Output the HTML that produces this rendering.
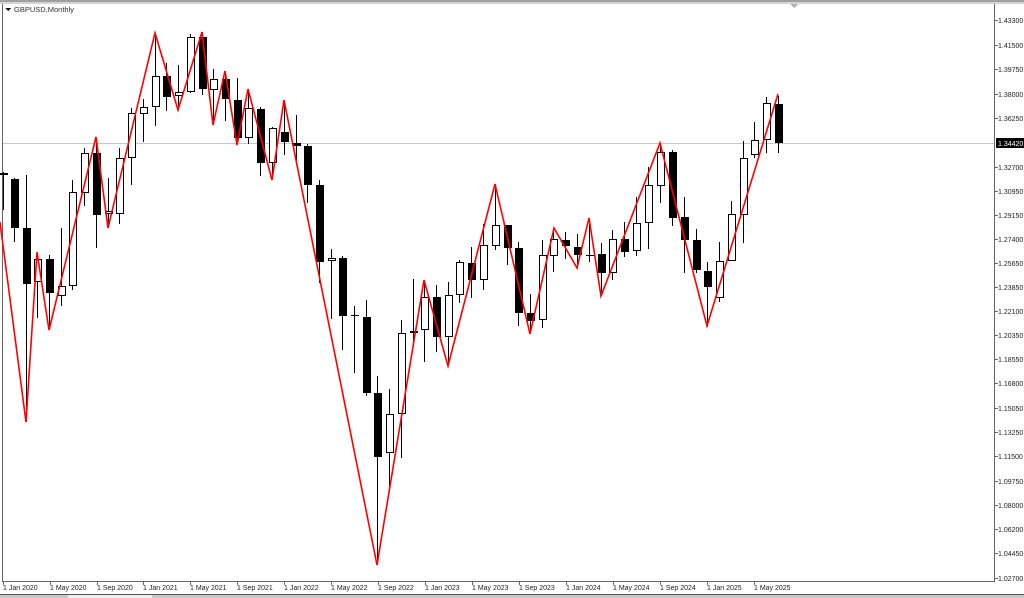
<!DOCTYPE html>
<html><head><meta charset="utf-8"><style>
html,body{margin:0;padding:0;background:#fff;width:1024px;height:598px;overflow:hidden}
svg{display:block;font-family:"Liberation Sans",Tahoma,sans-serif}
</style></head><body>
<svg width="1024" height="598" viewBox="0 0 1024 598" xmlns="http://www.w3.org/2000/svg" shape-rendering="crispEdges">
<rect x="0" y="0" width="1024" height="598" fill="#fff"/>
<rect x="0" y="0" width="1024" height="2" fill="#a0a0a0"/>
<rect x="0" y="2" width="1024" height="2" fill="#d4d4d4"/>
<polygon points="790,4 798,4 794,8" fill="#b0b0b0"/>
<!-- frame -->
<line x1="2.5" y1="4" x2="2.5" y2="581" stroke="#666" stroke-width="1"/>
<line x1="994.5" y1="4" x2="994.5" y2="581" stroke="#666" stroke-width="1"/>
<line x1="2" y1="581.5" x2="995" y2="581.5" stroke="#666" stroke-width="1"/>
<!-- current price line -->
<line x1="3" y1="143.5" x2="994" y2="143.5" stroke="#c8c8c8" stroke-width="1"/>
<!-- title -->
<polygon points="5,8 11,8 8,11" fill="#000"/>
<text x="14" y="12" font-size="7.5" fill="#333">GBPUSD,Monthly</text>
<!-- candles -->
<g stroke="#000" stroke-width="1" id="c"></g>
<g id="cs">
</g>
<!-- zigzag -->
<polyline fill="none" stroke="#ff0000" stroke-width="1.6" shape-rendering="auto" stroke-linejoin="miter" points="0,222 26,422 37,252 49,330 96,137 108,228 155,33 178,110 202,32 213,125 225,71 237,145 248,89 272,180 284,100 377,565 424,280 448,366 495,184 530,334 554,228 577,268 589,218 601,296 660,143 707,326 778,94"/>
<!-- right axis labels -->
<g font-size="7" fill="#222">
<g stroke="#666"><line x1="994" y1="20.5" x2="998" y2="20.5"/><line x1="994" y1="45.5" x2="998" y2="45.5"/><line x1="994" y1="69.5" x2="998" y2="69.5"/><line x1="994" y1="94.5" x2="998" y2="94.5"/><line x1="994" y1="118.5" x2="998" y2="118.5"/><line x1="994" y1="167.5" x2="998" y2="167.5"/><line x1="994" y1="191.5" x2="998" y2="191.5"/><line x1="994" y1="215.5" x2="998" y2="215.5"/><line x1="994" y1="239.5" x2="998" y2="239.5"/><line x1="994" y1="263.5" x2="998" y2="263.5"/><line x1="994" y1="287.5" x2="998" y2="287.5"/><line x1="994" y1="311.5" x2="998" y2="311.5"/><line x1="994" y1="335.5" x2="998" y2="335.5"/><line x1="994" y1="359.5" x2="998" y2="359.5"/><line x1="994" y1="383.5" x2="998" y2="383.5"/><line x1="994" y1="408.5" x2="998" y2="408.5"/><line x1="994" y1="432.5" x2="998" y2="432.5"/><line x1="994" y1="456.5" x2="998" y2="456.5"/><line x1="994" y1="481.5" x2="998" y2="481.5"/><line x1="994" y1="505.5" x2="998" y2="505.5"/><line x1="994" y1="529.5" x2="998" y2="529.5"/><line x1="994" y1="553.5" x2="998" y2="553.5"/><line x1="994" y1="578.5" x2="998" y2="578.5"/></g>
<text x="998" y="23">1.43300</text><text x="998" y="48">1.41500</text><text x="998" y="72">1.39750</text><text x="998" y="97">1.38000</text><text x="998" y="121">1.36250</text>
<rect x="996" y="138" width="28" height="10" fill="#000"/><text x="998" y="146" fill="#fff">1.34420</text>
<text x="998" y="170">1.32700</text><text x="998" y="194">1.30950</text><text x="998" y="218">1.29150</text><text x="998" y="242">1.27400</text><text x="998" y="266">1.25650</text><text x="998" y="290">1.23850</text><text x="998" y="314">1.22100</text><text x="998" y="338">1.20350</text><text x="998" y="362">1.18550</text><text x="998" y="386">1.16800</text><text x="998" y="411">1.15050</text><text x="998" y="435">1.13250</text><text x="998" y="459">1.11500</text><text x="998" y="484">1.09750</text><text x="998" y="508">1.08000</text><text x="998" y="532">1.06200</text><text x="998" y="556">1.04450</text><text x="998" y="581">1.02700</text>
</g>
<!-- bottom axis -->
<g font-size="7" fill="#222">
<g stroke="#666"><line x1="3.5" y1="581" x2="3.5" y2="585"/><line x1="50.5" y1="581" x2="50.5" y2="585"/><line x1="97.5" y1="581" x2="97.5" y2="585"/><line x1="143.5" y1="581" x2="143.5" y2="585"/><line x1="190.5" y1="581" x2="190.5" y2="585"/><line x1="237.5" y1="581" x2="237.5" y2="585"/><line x1="284.5" y1="581" x2="284.5" y2="585"/><line x1="331.5" y1="581" x2="331.5" y2="585"/><line x1="378.5" y1="581" x2="378.5" y2="585"/><line x1="425.5" y1="581" x2="425.5" y2="585"/><line x1="472.5" y1="581" x2="472.5" y2="585"/><line x1="519.5" y1="581" x2="519.5" y2="585"/><line x1="566.5" y1="581" x2="566.5" y2="585"/><line x1="613.5" y1="581" x2="613.5" y2="585"/><line x1="660.5" y1="581" x2="660.5" y2="585"/><line x1="707.5" y1="581" x2="707.5" y2="585"/><line x1="754.5" y1="581" x2="754.5" y2="585"/></g>
<text x="3" y="590">1 Jan 2020</text><text x="50" y="590">1 May 2020</text><text x="97" y="590">1 Sep 2020</text><text x="143" y="590">1 Jan 2021</text><text x="190" y="590">1 May 2021</text><text x="237" y="590">1 Sep 2021</text><text x="284" y="590">1 Jan 2022</text><text x="331" y="590">1 May 2022</text><text x="378" y="590">1 Sep 2022</text><text x="425" y="590">1 Jan 2023</text><text x="472" y="590">1 May 2023</text><text x="519" y="590">1 Sep 2023</text><text x="566" y="590">1 Jan 2024</text><text x="613" y="590">1 May 2024</text><text x="660" y="590">1 Sep 2024</text><text x="707" y="590">1 Jan 2025</text><text x="754" y="590">1 May 2025</text>
</g>
<rect x="0" y="594" width="1024" height="4" fill="#c8c8c8"/>
<rect x="0" y="594" width="1024" height="1" fill="#555"/>
<rect x="68" y="595" width="84" height="3" fill="#eee"/>
</svg>
<script>
var d=[[3,173,175,172,210,1],[14,179,228,178,242,1],[26,228,284,175,422,1],[37,259,282,253,318,0],[49,259,293,255,330,1],[61,286,296,228,306,0],[72,192,286,180,290,0],[84,153,193,148,206,0],[96,153,215,138,248,1],[108,211,214,178,228,0],[119,158,214,148,224,0],[131,113,158,108,185,0],[143,107,114,99,142,0],[155,76,107,33,126,0],[166,76,97,63,111,1],[178,92,96,65,110,0],[190,37,92,34,93,0],[202,37,89,32,95,1],[213,79,90,69,125,0],[225,79,99,71,121,1],[237,100,138,78,145,1],[248,108,138,89,144,0],[260,109,163,107,176,1],[272,128,163,127,180,0],[284,132,142,100,155,1],[296,143,146,115,165,1],[307,146,185,144,203,1],[319,185,262,180,283,1],[331,258,261,249,319,0],[342,258,316,256,350,1],[354,315,316,306,373,1],[366,317,393,300,396,1],[377,393,457,376,565,1],[389,414,453,389,490,0],[401,333,414,320,458,0],[413,331,333,279,342,0],[424,297,330,280,362,0],[436,297,337,285,352,1],[448,295,337,282,366,0],[459,262,295,260,303,0],[471,263,280,247,298,1],[483,245,280,224,290,0],[495,225,246,184,250,0],[507,225,248,225,265,1],[518,248,313,242,326,1],[530,313,321,294,334,1],[542,255,320,240,328,0],[553,239,256,230,272,0],[565,240,246,232,259,1],[577,247,255,234,268,1],[589,255,256,218,262,1],[601,254,273,243,296,1],[612,239,273,230,280,0],[624,239,252,222,257,1],[636,223,251,197,256,0],[648,185,223,167,249,0],[660,152,186,143,203,0],[672,152,218,150,226,1],[684,217,240,197,273,1],[696,240,270,229,273,1],[707,271,287,262,326,1],[719,261,298,242,302,0],[731,214,261,201,261,0],[743,158,215,141,243,0],[754,140,155,122,158,0],[766,103,140,97,153,0],[778,104,143,96,153,1]];
var s='';
d.forEach(function(c){var x=c[0];s+='<line x1="'+(x+0.5)+'" y1="'+c[3]+'" x2="'+(x+0.5)+'" y2="'+c[4]+'"/>';
if(c[5])s+='<rect x="'+(x-3)+'" y="'+c[1]+'" width="8" height="'+Math.max(c[2]-c[1],1)+'" fill="#000" stroke="none"/>';
else s+='<rect x="'+(x-3+0.5)+'" y="'+(c[1]+0.5)+'" width="7" height="'+Math.max(c[2]-c[1]-1,1)+'" fill="#fff"/>';});
document.getElementById('c').innerHTML=s;
</script>
</body></html>
